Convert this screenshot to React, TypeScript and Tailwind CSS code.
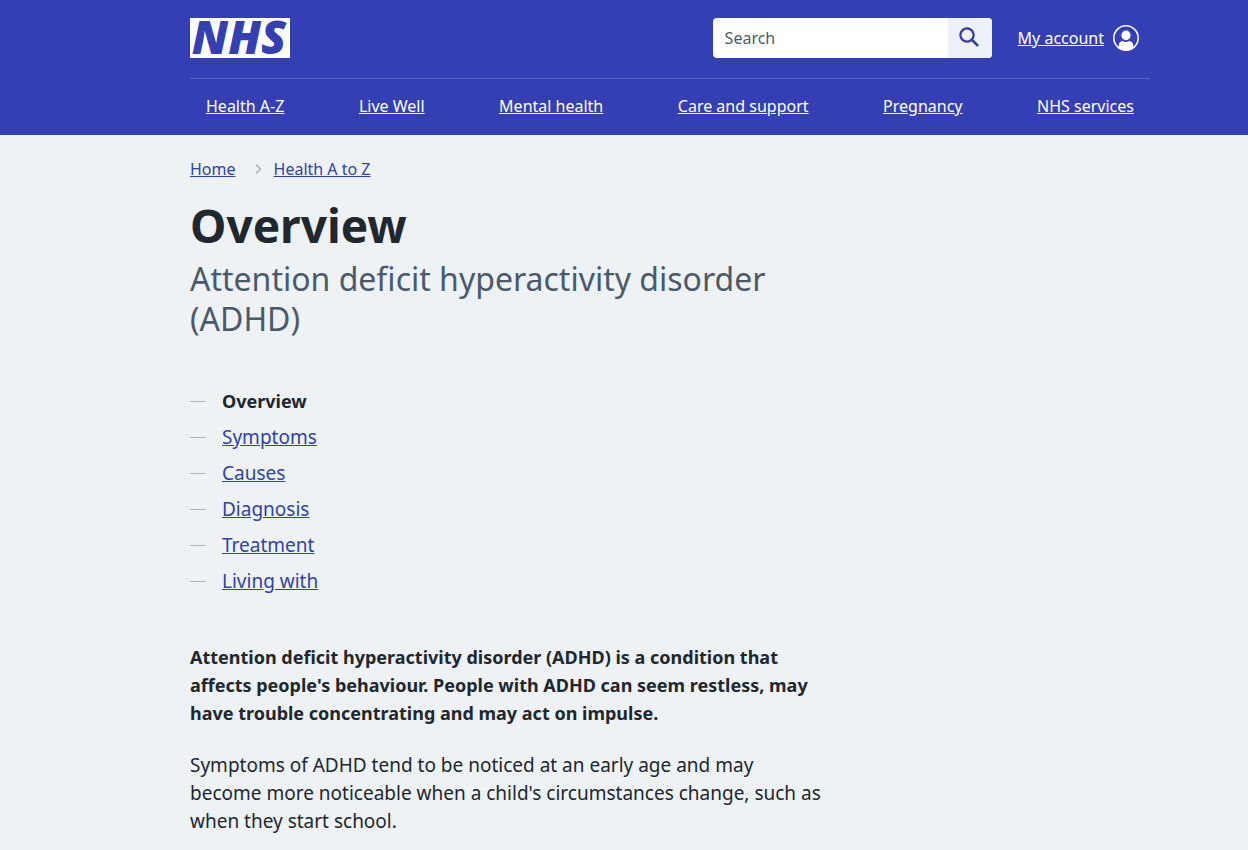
const navLinks = [
  "Health A-Z",
  "Live Well",
  "Mental health",
  "Care and support",
  "Pregnancy",
  "NHS services",
];

const pages = [
  "Overview",
  "Symptoms",
  "Causes",
  "Diagnosis",
  "Treatment",
  "Living with",
];

function Logo() {
  return (
    <svg
      viewBox="0 0 100 40"
      className="h-10 w-[100px] overflow-visible"
      aria-hidden="true"
    >
      <rect width="100" height="40" fill="#fff" />
      <text
        x="49"
        y="36"
        textAnchor="middle"
        fill="#333fb3"
        className="font-['Open_Sans',sans-serif] text-[46px] font-extrabold italic"
      >
        NHS
      </text>
    </svg>
  );
}

function SearchIcon() {
  return (
    <svg viewBox="0 0 20 20" className="size-5" fill="none" aria-hidden="true">
      <circle cx="8" cy="8" r="6.6" stroke="currentColor" strokeWidth="2.3" />
      <path
        d="M13 13 18.4 18.2"
        stroke="currentColor"
        strokeWidth="2.6"
        strokeLinecap="round"
      />
    </svg>
  );
}

function AccountIcon() {
  return (
    <svg viewBox="0 0 26 26" className="size-[26px]" fill="none" aria-hidden="true">
      <circle cx="13" cy="13" r="12.2" stroke="currentColor" strokeWidth="1.5" />
      <ellipse cx="13" cy="10.4" rx="4.6" ry="4.9" fill="currentColor" />
      <path
        d="M5.8 23v-2.6c0-2.5 1.5-4.2 4-4.4.9.5 2.1.9 3.200.9s2.300-.4 3.200-.9c2.500.2 4 1.900 4 4.400V23c-1.900 1.500-4.500 2.200-7.200 2.200S7.700 24.500 5.800 23z"
        fill="currentColor"
      />
    </svg>
  );
}

function Header() {
  return (
    <header className="bg-[#333fb3] pr-[98px] pl-[190px] text-base text-white">
      <div className="flex items-center justify-between border-b border-[#5562c8] pt-[18px] pb-5">
        <a href="#" aria-label="NHS homepage">
          <Logo />
        </a>
        <div className="flex items-center pr-[11px]">
          <form role="search" className="flex h-10 w-[279px] overflow-hidden rounded-sm bg-white">
            <input
              type="search"
              aria-label="Search"
              placeholder="Search"
              className="min-w-0 flex-1 px-3 text-base text-[#20272f] placeholder:text-[#4c5a68]"
            />
            <button
              type="submit"
              aria-label="Search"
              className="flex w-11 items-center justify-center bg-[#edf1f5] pr-0.5 pb-0.5 text-[#333fa5]"
            >
              <SearchIcon />
            </button>
          </form>
          <a href="#" className="ml-[26px] flex items-center gap-[9px]">
            <span className="underline">My account</span>
            <AccountIcon />
          </a>
        </div>
      </div>
      <nav aria-label="Primary">
        <ul className="flex h-14 items-center justify-between px-4 pb-0.5">
          {navLinks.map((label) => (
            <li key={label}>
              <a href="#" className="underline">
                {label}
              </a>
            </li>
          ))}
        </ul>
      </nav>
    </header>
  );
}

function Breadcrumb() {
  return (
    <nav aria-label="Breadcrumb">
      <ol className="flex items-center text-base text-[#2f43a8]">
        <li>
          <a href="#" className="underline">
            Home
          </a>
        </li>
        <li className="flex items-center">
          <svg
            viewBox="0 0 8 10"
            className="mr-3 ml-[18px] h-2.5 w-2"
            fill="none"
            stroke="#a5b0b8"
            strokeWidth="1.5"
            aria-hidden="true"
          >
            <path d="M2 .8 6.4 5 2 9.2" />
          </svg>
          <a href="#" className="underline">
            Health A to Z
          </a>
        </li>
      </ol>
    </nav>
  );
}

export default function App() {
  return (
    <div className="min-h-screen bg-[#eef2f5] font-['Noto_Sans',sans-serif] text-[#20272f]">
      <Header />
      <div className="pt-[22px] pr-[98px] pl-[190px]">
        <Breadcrumb />
        <main className="max-w-[632px]">
          <h1 className="mt-3.5">
            <span className="block text-[46px] leading-[60px] font-bold">
              Overview
            </span>
            <span className="mt-1 block text-[32px] leading-10 text-[#4a5a6b]">
              Attention deficit hyperactivity disorder (ADHD)
            </span>
          </h1>

          <ol className="mt-11 text-[19px] leading-9">
            {pages.map((page, i) => (
              <li key={page} className="flex items-center gap-4">
                <span className="h-px w-4 bg-[#aeb7bd]" />
                {i === 0 ? (
                  <span className="text-[18px] font-bold" aria-current="page">
                    {page}
                  </span>
                ) : (
                  <a href="#" className="text-[#2f43a8] underline">
                    {page}
                  </a>
                )}
              </li>
            ))}
          </ol>

          <div className="mt-11 space-y-6">
            <p className="text-[18px] leading-7 font-bold">
              Attention deficit hyperactivity disorder (ADHD) is a condition
              that affects people's behaviour. People with ADHD can seem
              restless, may have trouble concentrating and may act on impulse.
            </p>
            <p className="text-[19px] leading-7">
              Symptoms of ADHD tend to be noticed at an early age and may become
              more noticeable when a child's circumstances change, such as when
              they start school.
            </p>
          </div>
        </main>
      </div>
    </div>
  );
}
